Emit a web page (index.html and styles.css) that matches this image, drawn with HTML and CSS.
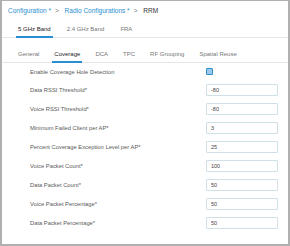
FILE: index.html
```html
<!DOCTYPE html>
<html lang="en">
<head>
  <meta charset="UTF-8" />
  <title>RRM</title>
  <link rel="stylesheet" href="styles.css">
</head>
<body>
  <div class="frame">
    <div class="crumbs">
      <span class="link">Configuration *</span><span class="sep">&gt;</span>
      <span class="link">Radio Configurations *</span><span class="sep">&gt;</span>
      <span class="current">RRM</span>
    </div>

    <div class="tabs bands">
      <div class="tab active">5 GHz Band</div>
      <div class="tab">2.4 GHz Band</div>
      <div class="tab">FRA</div>
    </div>

    <div class="tabs sub">
      <div class="tab">General</div>
      <div class="tab active">Coverage</div>
      <div class="tab">DCA</div>
      <div class="tab">TPC</div>
      <div class="tab">RF Grouping</div>
      <div class="tab">Spatial Reuse</div>
    </div>

    <div class="form">
      <div class="row first">
        <label>Enable Coverage Hole Detection</label>
        <div class="field"><span class="check"></span></div>
      </div>
      <div class="row">
        <label>Data RSSI Threshold*</label>
        <div class="field"><input type="text" value="-80"></div>
      </div>
      <div class="row">
        <label>Voice RSSI Threshold*</label>
        <div class="field"><input type="text" value="-80"></div>
      </div>
      <div class="row">
        <label>Minimum Failed Client per AP*</label>
        <div class="field"><input type="text" value="3"></div>
      </div>
      <div class="row">
        <label>Percent Coverage Exception Level per AP*</label>
        <div class="field"><input type="text" value="25"></div>
      </div>
      <div class="row">
        <label>Voice Packet Count*</label>
        <div class="field"><input type="text" value="100"></div>
      </div>
      <div class="row">
        <label>Data Packet Count*</label>
        <div class="field"><input type="text" value="50"></div>
      </div>
      <div class="row">
        <label>Voice Packet Percentage*</label>
        <div class="field"><input type="text" value="50"></div>
      </div>
      <div class="row">
        <label>Data Packet Percentage*</label>
        <div class="field"><input type="text" value="50"></div>
      </div>
    </div>
  </div>
</body>
</html>
```

FILE: styles.css
```css
body {
  margin: 0;
  background: #fff;
  font-family: 'Liberation Sans', Arial, sans-serif;
  color: #555;
}
.frame {
  width: 290px;
  height: 246px;
  box-sizing: border-box;
  border: 2px solid #b0b0b0;
  border-top-width: 1px;
}
.crumbs {
  padding: 6px 0 0 6px;
  font-size: 6.5px;
  line-height: 8px;
  white-space: nowrap;
}
.crumbs .link {
  color: #2a8fd0;
}
.crumbs .sep {
  color: #777;
  margin: 0 4px;
}
.crumbs .current {
  color: #333;
}
.tabs {
  display: flex;
  border-bottom: 1px solid #e6e6e6;
  font-size: 6px;
  white-space: nowrap;
}
.tab {
  color: #777;
  padding: 0 2px 3px;
  border-bottom: 2px solid transparent;
  margin-bottom: -1px;
  line-height: 8px;
}
.tab.active {
  color: #222;
  border-bottom-color: #2a8fd0;
}
.bands {
  margin-top: 10px;
  padding-left: 14px;
  gap: 12px;
}
.sub {
  margin-top: 12px;
  padding-left: 14px;
  gap: 11px;
}
.form {
  padding: 0 10px 0 28px;
}
.row {
  display: flex;
  align-items: center;
  height: 19px;
}
.row.first {
  height: 17px;
}
.row label {
  flex: 1;
  font-size: 5.8px;
  color: #5a5a5a;
}
.field {
  width: 72px;
}
.check {
  display: block;
  width: 5px;
  height: 5px;
  border: 1px solid #2a8fd0;
  background: #9cc9ec;
  border-radius: 1px;
}
input {
  display: block;
  box-sizing: border-box;
  width: 72px;
  height: 12px;
  border: 1px solid #cfe0e8;
  border-radius: 1px;
  padding: 0 4px;
  font-family: inherit;
  font-size: 5.5px;
  color: #444;
}
```
